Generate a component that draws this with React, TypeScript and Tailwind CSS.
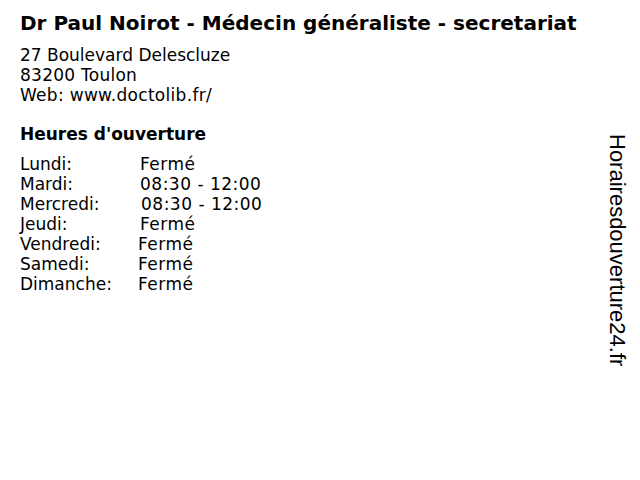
const hours = [
  { day: 'Lundi:', value: 'Fermé', w: 'w-[120px]' },
  { day: 'Mardi:', value: '08:30 - 12:00', w: 'w-[120px]' },
  { day: 'Mercredi:', value: '08:30 - 12:00', w: 'w-[121px]' },
  { day: 'Jeudi:', value: 'Fermé', w: 'w-[120px]' },
  { day: 'Vendredi:', value: 'Fermé', w: 'w-[118px]' },
  { day: 'Samedi:', value: 'Fermé', w: 'w-[118px]' },
  { day: 'Dimanche:', value: 'Fermé', w: 'w-[118px]' },
];

export default function App() {
  return (
    <div className="flex w-[640px] h-[480px] bg-white text-black font-['DejaVu_Sans',sans-serif]">
      <div className="flex-1 pl-5 pt-[11px]">
        <h1 className="text-[20px] font-bold leading-[24px]">
          Dr Paul Noirot - Médecin généraliste - secretariat
        </h1>
        <div className="mt-[10px] text-[17px] leading-[20px]">
          <p>27 Boulevard Delescluze</p>
          <p className="tracking-[0.25px]">83200 Toulon</p>
          <p className="tracking-[0.3px]">Web: www.doctolib.fr/</p>
        </div>
        <h2 className="mt-[19px] text-[17px] font-bold leading-[20px]">Heures d'ouverture</h2>
        <div className="mt-[10px] text-[17px] leading-[20px]">
          {hours.map((h) => (
            <div key={h.day} className="flex">
              <span className={h.w}>{h.day}</span>
              <span className="tracking-[0.5px]">{h.value}</span>
            </div>
          ))}
        </div>
      </div>
      <div className="w-[40px] pt-[134px] pl-[4px] flex justify-start">
        <span className="[writing-mode:vertical-rl] text-[22px] leading-[26px] font-['Liberation_Sans',sans-serif]">
          Horairesdouverture24.fr
        </span>
      </div>
    </div>
  );
}
